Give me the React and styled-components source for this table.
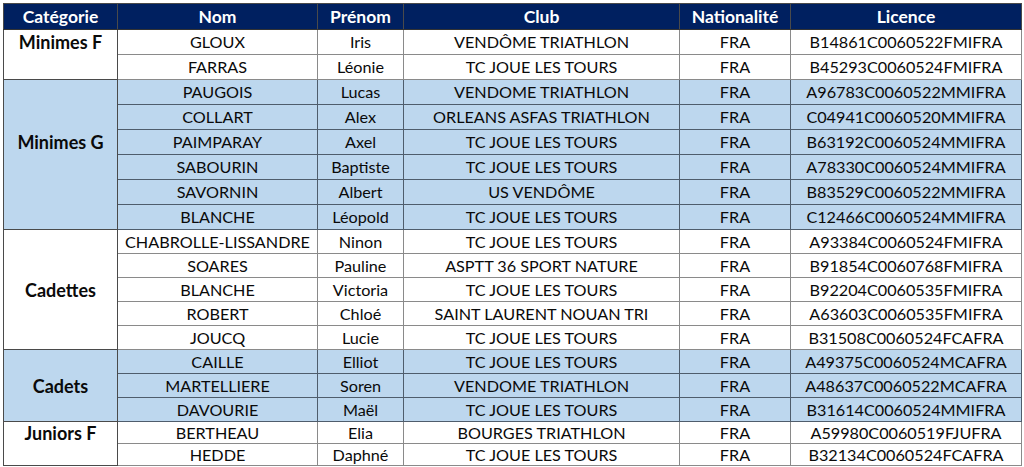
import React from 'react';
import styled, { createGlobalStyle } from 'styled-components';

const GlobalStyle = createGlobalStyle`
  html, body {
    margin: 0;
    padding: 0;
    background: #ffffff;
  }
  body {
    font-family: Lato, "Liberation Sans", sans-serif;
  }
`;

const Page = styled.div`
  padding: 3px 0 0 3px;
`;

const Table = styled.table`
  border-collapse: collapse;
  table-layout: fixed;
  width: 1018px;
  border: 1px solid #4a4a4a;
  font-size: 16.2px;
  color: #0a0a0a;
`;

const HeadCell = styled.th`
  background: #002060;
  color: #ffffff;
  font-weight: 700;
  font-size: 17.5px;
  height: 25px;
  padding: 0;
  text-align: center;
  border: 1px solid #4a4a4a;
  border-bottom-color: #333;
`;

const Row = styled.tr`
  height: ${(p) => p.$h}px;
  background: ${(p) => (p.$shade ? '#bdd7ee' : '#ffffff')};
`;

const Cell = styled.td`
  padding: 1px 0 0;
  text-align: center;
  white-space: nowrap;
  line-height: 1;
  border: 1px solid ${(p) => (p.$shade ? '#4f5d6c' : '#8a8a8a')};
`;

const CatCell = styled.td`
  padding: 0;
  text-align: center;
  font-weight: 700;
  font-size: 18px;
  line-height: 1;
  border-left: 1px solid #4a4a4a;
  border-right: 1px solid #4a4a4a;
  border-top: ${(p) => (p.$first ? '1px solid #4a4a4a' : 'none')};
  border-bottom: ${(p) => (p.$last ? '1px solid #4a4a4a' : 'none')};
`;

const columns = [
  { label: 'Catégorie', width: 114 },
  { label: 'Nom', width: 200 },
  { label: 'Prénom', width: 86 },
  { label: 'Club', width: 276 },
  { label: 'Nationalité', width: 111 },
  { label: 'Licence', width: 231 },
];

const groups = [
  {
    name: 'Minimes F',
    shade: false,
    labelAt: 0,
    h: 25,
    rows: [
      ['GLOUX', 'Iris', 'VENDÔME TRIATHLON', 'B14861C0060522FMIFRA'],
      ['FARRAS', 'Léonie', 'TC JOUE LES TOURS', 'B45293C0060524FMIFRA'],
    ],
  },
  {
    name: 'Minimes G',
    shade: true,
    labelAt: 2,
    h: 25,
    rows: [
      ['PAUGOIS', 'Lucas', 'VENDOME TRIATHLON', 'A96783C0060522MMIFRA'],
      ['COLLART', 'Alex', 'ORLEANS ASFAS TRIATHLON', 'C04941C0060520MMIFRA'],
      ['PAIMPARAY', 'Axel', 'TC JOUE LES TOURS', 'B63192C0060524MMIFRA'],
      ['SABOURIN', 'Baptiste', 'TC JOUE LES TOURS', 'A78330C0060524MMIFRA'],
      ['SAVORNIN', 'Albert', 'US VENDÔME', 'B83529C0060522MMIFRA'],
      ['BLANCHE', 'Léopold', 'TC JOUE LES TOURS', 'C12466C0060524MMIFRA'],
    ],
  },
  {
    name: 'Cadettes',
    shade: false,
    labelAt: 2,
    h: 24,
    rows: [
      ['CHABROLLE-LISSANDRE', 'Ninon', 'TC JOUE LES TOURS', 'A93384C0060524FMIFRA'],
      ['SOARES', 'Pauline', 'ASPTT 36 SPORT NATURE', 'B91854C0060768FMIFRA'],
      ['BLANCHE', 'Victoria', 'TC JOUE LES TOURS', 'B92204C0060535FMIFRA'],
      ['ROBERT', 'Chloé', 'SAINT LAURENT NOUAN TRI', 'A63603C0060535FMIFRA'],
      ['JOUCQ', 'Lucie', 'TC JOUE LES TOURS', 'B31508C0060524FCAFRA'],
    ],
  },
  {
    name: 'Cadets',
    shade: true,
    labelAt: 1,
    h: 24,
    rows: [
      ['CAILLE', 'Elliot', 'TC JOUE LES TOURS', 'A49375C0060524MCAFRA'],
      ['MARTELLIERE', 'Soren', 'VENDOME TRIATHLON', 'A48637C0060522MCAFRA'],
      ['DAVOURIE', 'Maël', 'TC JOUE LES TOURS', 'B31614C0060524MMIFRA'],
    ],
  },
  {
    name: 'Juniors F',
    shade: false,
    labelAt: 0,
    h: 22,
    rows: [
      ['BERTHEAU', 'Elia', 'BOURGES TRIATHLON', 'A59980C0060519FJUFRA'],
      ['HEDDE', 'Daphné', 'TC JOUE LES TOURS', 'B32134C0060524FCAFRA'],
    ],
  },
];

export default function App() {
  return (
    <Page>
      <GlobalStyle />
      <Table>
        <colgroup>
          {columns.map((c) => (
            <col key={c.label} style={{ width: c.width }} />
          ))}
        </colgroup>
        <thead>
          <tr>
            {columns.map((c) => (
              <HeadCell key={c.label}>{c.label}</HeadCell>
            ))}
          </tr>
        </thead>
        <tbody>
          {groups.map((g) =>
            g.rows.map((r, i) => (
              <Row key={g.name + i} $h={g.h} $shade={g.shade}>
                <CatCell $first={i === 0} $last={i === g.rows.length - 1}>
                  {i === g.labelAt ? g.name : ''}
                </CatCell>
                <Cell $shade={g.shade}>{r[0]}</Cell>
                <Cell $shade={g.shade}>{r[1]}</Cell>
                <Cell $shade={g.shade}>{r[2]}</Cell>
                <Cell $shade={g.shade}>FRA</Cell>
                <Cell $shade={g.shade}>{r[3]}</Cell>
              </Row>
            ))
          )}
        </tbody>
      </Table>
    </Page>
  );
}
